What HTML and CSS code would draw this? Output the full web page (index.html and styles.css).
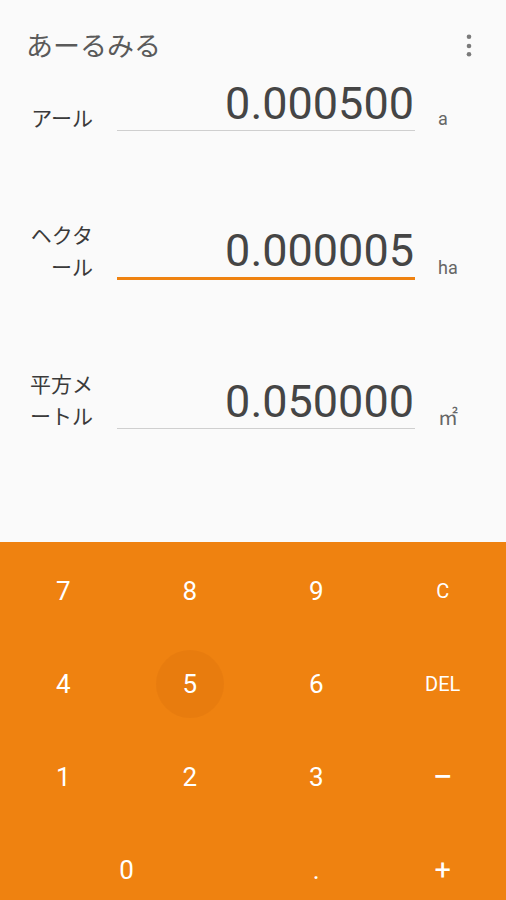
FILE: index.html
```html
<!DOCTYPE html>
<html lang="ja">
<head>
<meta charset="utf-8">
<title>あーるみる</title>
<link rel="stylesheet" href="styles.css">
</head>
<body>
<div class="app">
  <header class="appbar">
    <h1 class="title">あーるみる</h1>
    <button class="menu" aria-label="menu">
      <svg width="24" height="24" viewBox="0 0 24 24"><circle cx="12" cy="3.7" r="2.3"/><circle cx="12" cy="13" r="2.3"/><circle cx="12" cy="21.3" r="2.3"/></svg>
    </button>
  </header>
  <main class="units">
    <div class="row row-first">
      <div class="label">アール</div>
      <div class="field"><span class="value">0.000500</span></div>
      <div class="unit">a</div>
    </div>
    <div class="row">
      <div class="label">ヘクタ<br>ール</div>
      <div class="field field-active"><span class="value">0.000005</span></div>
      <div class="unit">ha</div>
    </div>
    <div class="row">
      <div class="label">平方メ<br>ートル</div>
      <div class="field"><span class="value">0.050000</span></div>
      <div class="unit unit-cjk">㎡</div>
    </div>
  </main>
  <section class="keypad">
    <div class="key">7</div>
    <div class="key">8</div>
    <div class="key">9</div>
    <div class="key key-small">C</div>
    <div class="key">4</div>
    <div class="key key-pressed"><span>5</span></div>
    <div class="key">6</div>
    <div class="key key-small">DEL</div>
    <div class="key">1</div>
    <div class="key">2</div>
    <div class="key">3</div>
    <div class="key key-minus">−</div>
    <div class="key key-wide">0</div>
    <div class="key">.</div>
    <div class="key key-op">+</div>
  </section>
</div>
</body>
</html>
```
FILE: styles.css
```css
* { box-sizing: border-box; }
html, body {
  margin: 0;
  padding: 0;
  background: #fafafa;
}
body {
  width: 506px;
  height: 900px;
  overflow: hidden;
  font-family: Roboto, "Noto Sans CJK JP", sans-serif;
}
.app {
  display: flex;
  flex-direction: column;
  height: 900px;
}
.appbar {
  height: 78px;
  display: flex;
  justify-content: space-between;
  align-items: flex-start;
  padding: 25px 25px 0 26px;
}
.title {
  margin: 0;
  font-family: "Noto Sans CJK JP", sans-serif;
  font-weight: 400;
  font-size: 27px;
  line-height: 40px;
  color: #5a5a5a;
}
.menu {
  border: 0;
  background: none;
  padding: 0;
  margin-top: 8px;
  width: 24px;
  height: 24px;
  fill: #7a7a7a;
}
.menu svg { display: block; }
.units {
  display: flex;
  flex-direction: column;
}
.row {
  height: 149px;
  display: flex;
  align-items: flex-end;
  padding-left: 27px;
}
.row-first { height: 53px; }
.label {
  width: 66px;
  text-align: right;
  font-family: "Noto Sans CJK JP", sans-serif;
  font-size: 21px;
  line-height: 32px;
  color: #3a3a3a;
  margin-bottom: -2px;
}
.field {
  width: 298px;
  margin-left: 24px;
  border-bottom: 1px solid #cfcfcf;
  text-align: right;
  padding-right: 1px;
}
.field-active {
  border-bottom: 3px solid #ef8210;
}
.value {
  display: block;
  font-size: 45px;
  font-weight: 400;
  line-height: 52px;
  color: #454545;
}
.unit {
  margin-left: 23px;
  font-size: 18px;
  line-height: 20px;
  color: #666;
  margin-bottom: 2px;
}
.unit-cjk {
  font-family: "Noto Sans CJK JP", sans-serif;
  font-size: 20px;
}
.keypad {
  margin-top: auto;
  height: 358px;
  overflow: hidden;
  background: #ef8210;
  padding-top: 2px;
  display: grid;
  grid-template-columns: repeat(4, 1fr);
  grid-auto-rows: 93px;
}
.key {
  display: flex;
  align-items: center;
  justify-content: center;
  color: #fff;
  font-size: 26px;
  position: relative;
}
.key-small { font-size: 20px; }
.key-op { font-size: 29px; }
.key-minus { font-size: 36px; }
.key-wide { grid-column: span 2; }
.key-pressed::before {
  content: "";
  position: absolute;
  width: 68px;
  height: 68px;
  border-radius: 50%;
  background: rgba(150, 60, 0, 0.08);
  left: 50%;
  top: 50%;
  transform: translate(-50%, -50%);
}
.key-pressed span { position: relative; }
```
